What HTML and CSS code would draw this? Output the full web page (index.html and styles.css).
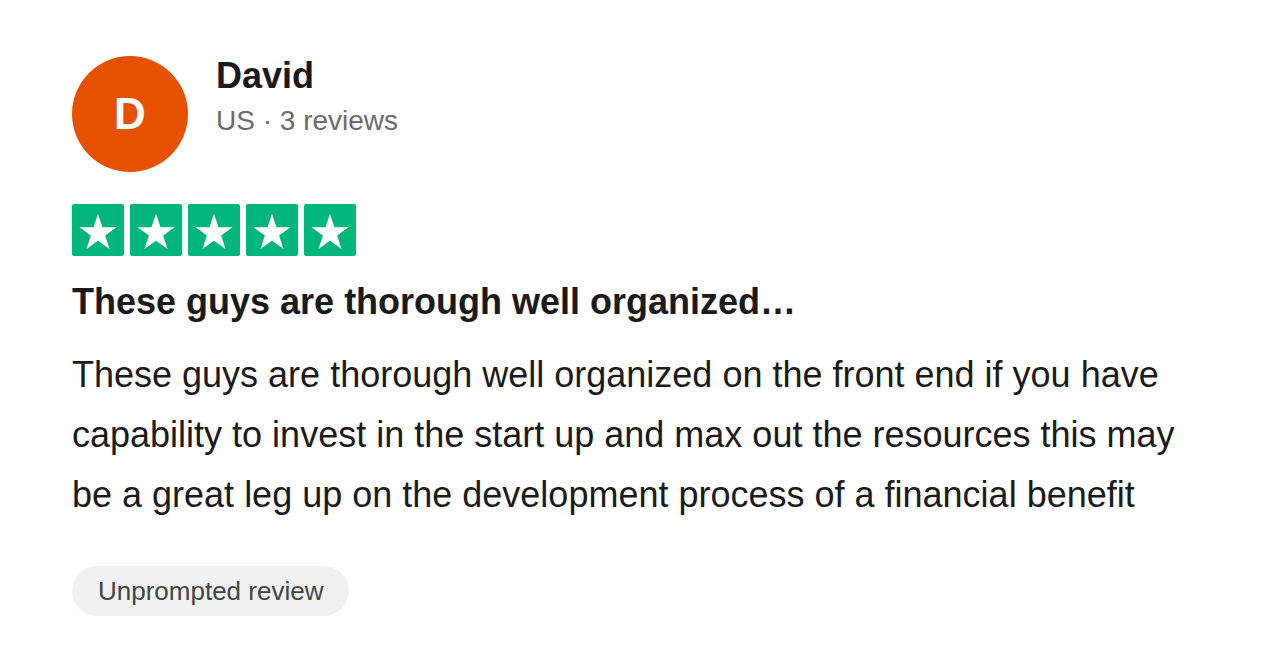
FILE: index.html
```html
<!DOCTYPE html>
<html lang="en">

<head>
    <meta charset="UTF-8">
    <meta name="viewport" content="width=device-width, initial-scale=1.0">
    <title>Review</title>
    <link rel="stylesheet" href="styles.css">
</head>

<body>
    <article class="review">
        <div class="reviewer">
            <div class="avatar">D</div>
            <div class="reviewer-info">
                <div class="reviewer-name">David</div>
                <div class="reviewer-meta">US · 3 reviews</div>
            </div>
        </div>

        <div class="stars">
            <span class="star"><svg viewBox="0 0 24 24"><path d="M12 3.2l2.45 7.3h7.65l-6.2 4.5 2.38 7.3L12 17.8l-6.28 4.5 2.38-7.3-6.2-4.5h7.65z" /></svg></span>
            <span class="star"><svg viewBox="0 0 24 24"><path d="M12 3.2l2.45 7.3h7.65l-6.2 4.5 2.38 7.3L12 17.8l-6.28 4.5 2.38-7.3-6.2-4.5h7.65z" /></svg></span>
            <span class="star"><svg viewBox="0 0 24 24"><path d="M12 3.2l2.45 7.3h7.65l-6.2 4.5 2.38 7.3L12 17.8l-6.28 4.5 2.38-7.3-6.2-4.5h7.65z" /></svg></span>
            <span class="star"><svg viewBox="0 0 24 24"><path d="M12 3.2l2.45 7.3h7.65l-6.2 4.5 2.38 7.3L12 17.8l-6.28 4.5 2.38-7.3-6.2-4.5h7.65z" /></svg></span>
            <span class="star"><svg viewBox="0 0 24 24"><path d="M12 3.2l2.45 7.3h7.65l-6.2 4.5 2.38 7.3L12 17.8l-6.28 4.5 2.38-7.3-6.2-4.5h7.65z" /></svg></span>
        </div>

        <h2 class="review-title">These guys are thorough well organized…</h2>
        <p class="review-text">These guys are thorough well organized on the front end if you have capability to invest in the start up and max out the resources this may be a great leg up on the development process of a financial benefit</p>

        <span class="badge">Unprompted review</span>
    </article>
</body>

</html>
```

FILE: styles.css
```css
/* Page */
body {
    margin: 0;
    font-family: "Liberation Sans", Arial, sans-serif;
    background-color: #ffffff;
    color: #1a1a1a;
}

.review {
    padding: 56px 72px;
}

/* Reviewer header */
.reviewer {
    display: flex;
    align-items: flex-start;
    gap: 28px;
}

.avatar {
    width: 116px;
    height: 116px;
    border-radius: 50%;
    background-color: #e65100;
    color: #ffffff;
    font-size: 44px;
    font-weight: 700;
    display: flex;
    align-items: center;
    justify-content: center;
    flex-shrink: 0;
}

.reviewer-name {
    font-size: 36px;
    font-weight: 700;
    line-height: 40px;
}

.reviewer-meta {
    font-size: 28px;
    line-height: 40px;
    margin-top: 5px;
    color: #6b6b6b;
}

/* Rating */
.stars {
    display: flex;
    gap: 6px;
    margin-top: 32px;
}

.star {
    width: 52px;
    height: 52px;
    background-color: #00b67a;
    border-radius: 2px;
    display: flex;
    align-items: center;
    justify-content: center;
}

.star svg {
    width: 44px;
    height: 44px;
    fill: #ffffff;
}

/* Review content */
.review-title {
    font-size: 36px;
    font-weight: 700;
    line-height: 44px;
    margin: 24px 0 0;
}

.review-text {
    font-size: 36px;
    line-height: 60px;
    margin: 21px 0 0;
}

.badge {
    display: inline-block;
    margin-top: 41px;
    padding: 0 26px;
    height: 50px;
    line-height: 50px;
    border-radius: 25px;
    background-color: #f1f1f1;
    color: #444444;
    font-size: 26px;
}
```
